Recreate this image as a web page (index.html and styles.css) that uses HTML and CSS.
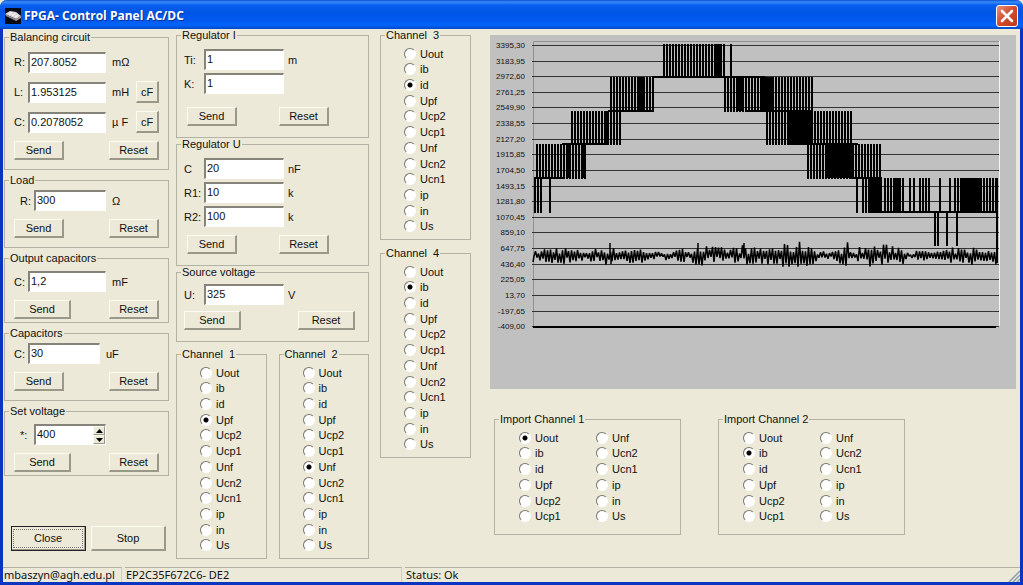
FILE: index.html
```html
<!DOCTYPE html>
<html lang="en">
<head>
    <meta charset="UTF-8">
    <meta name="viewport" content="width=device-width, initial-scale=1.0">
    <title>FPGA- Control Panel AC/DC</title>
    <link rel="stylesheet" href="styles.css">
</head>
<body>
    <div class="window">
        <header class="title-bar">
            <svg class="app-icon" width="16" height="16" viewBox="0 0 16 16" aria-hidden="true">
                <rect width="16" height="16" fill="#0a0a14"/>
                <path d="M0 6 L5 3 L11 4 L16 8 L11 11 Z" fill="#dcd8d8"/>
                <path d="M0 6 L11 11 V13 L1 8 Z" fill="#8f8c90"/>
                <path d="M11 11 L16 8 V10 L11 13 Z" fill="#b5a0a0"/>
                <path d="M4 6 L7 4.5 M7 7.5 L10 6 M10 9 L13 7.5" stroke="#fff" stroke-width="1"/>
            </svg>
            <h1>FPGA- Control Panel AC/DC</h1>
            <button class="close-window" type="button" aria-label="Close window">
                <svg width="14" height="14" viewBox="0 0 14 14" aria-hidden="true">
                    <path d="M2 2 L12 12 M12 2 L2 12" stroke="#fff" stroke-width="2.6" stroke-linecap="round"/>
                </svg>
            </button>
        </header>

        <main class="client">
            <div class="column circuit-column">
                <fieldset class="group balancing">
                    <legend>Balancing circuit</legend>
                    <div class="rows">
                        <div class="row">
                            <label for="bal-r">R:</label>
                            <input id="bal-r" type="text" value="207.8052">
                            <span class="unit">mΩ</span>
                        </div>
                        <div class="row">
                            <label for="bal-l">L:</label>
                            <input id="bal-l" type="text" value="1.953125">
                            <span class="unit">mH</span>
                            <button class="calc" type="button">cF</button>
                        </div>
                        <div class="row">
                            <label for="bal-c">C:</label>
                            <input id="bal-c" type="text" value="0.2078052">
                            <span class="unit">µ F</span>
                            <button class="calc" type="button">cF</button>
                        </div>
                    </div>
                    <div class="actions">
                        <button type="button">Send</button>
                        <button type="button">Reset</button>
                    </div>
                </fieldset>

                <fieldset class="group">
                    <legend>Load</legend>
                    <div class="row indented">
                        <label for="load-r">R:</label>
                        <input id="load-r" class="short" type="text" value="300">
                        <span class="unit">Ω</span>
                    </div>
                    <div class="actions">
                        <button type="button">Send</button>
                        <button type="button">Reset</button>
                    </div>
                </fieldset>

                <fieldset class="group roomy">
                    <legend>Output capacitors</legend>
                    <div class="row">
                        <label for="out-c">C:</label>
                        <input id="out-c" type="text" value="1,2">
                        <span class="unit">mF</span>
                    </div>
                    <div class="actions">
                        <button class="wide" type="button">Send</button>
                        <button type="button">Reset</button>
                    </div>
                </fieldset>

                <fieldset class="group">
                    <legend>Capacitors</legend>
                    <div class="row">
                        <label for="cap-c">C:</label>
                        <input id="cap-c" class="short" type="text" value="30">
                        <span class="unit">uF</span>
                    </div>
                    <div class="actions">
                        <button type="button">Send</button>
                        <button type="button">Reset</button>
                    </div>
                </fieldset>

                <fieldset class="group roomy">
                    <legend>Set voltage</legend>
                    <div class="row indented">
                        <label for="set-v">*:</label>
                        <div class="spinner">
                            <input id="set-v" class="short" type="text" value="400">
                            <div class="spin-buttons">
                                <button type="button" aria-label="Increase"><svg width="7" height="4" viewBox="0 0 7 4"><path d="M0 4 L3.5 0 L7 4 Z"/></svg></button>
                                <button type="button" aria-label="Decrease"><svg width="7" height="4" viewBox="0 0 7 4"><path d="M0 0 L3.5 4 L7 0 Z"/></svg></button>
                            </div>
                        </div>
                    </div>
                    <div class="actions">
                        <button class="wide" type="button">Send</button>
                        <button type="button">Reset</button>
                    </div>
                </fieldset>

                <div class="main-actions">
                    <button class="default" type="button"><span>Close</span></button>
                    <button type="button">Stop</button>
                </div>
            </div>

            <div class="column regulator-column">
                <fieldset class="group regulator regulator-i">
                    <legend>Regulator I</legend>
                    <div class="rows">
                        <div class="row">
                            <label for="reg-ti">Ti:</label>
                            <input id="reg-ti" type="text" value="1">
                            <span class="unit">m</span>
                        </div>
                        <div class="row">
                            <label for="reg-k">K:</label>
                            <input id="reg-k" type="text" value="1">
                        </div>
                    </div>
                    <div class="actions">
                        <button type="button">Send</button>
                        <button type="button">Reset</button>
                    </div>
                </fieldset>

                <fieldset class="group regulator">
                    <legend>Regulator U</legend>
                    <div class="rows">
                        <div class="row">
                            <label for="reg-c">C</label>
                            <input id="reg-c" type="text" value="20">
                            <span class="unit">nF</span>
                        </div>
                        <div class="row">
                            <label for="reg-r1">R1:</label>
                            <input id="reg-r1" type="text" value="10">
                            <span class="unit">k</span>
                        </div>
                        <div class="row">
                            <label for="reg-r2">R2:</label>
                            <input id="reg-r2" type="text" value="100">
                            <span class="unit">k</span>
                        </div>
                    </div>
                    <div class="actions">
                        <button type="button">Send</button>
                        <button type="button">Reset</button>
                    </div>
                </fieldset>

                <fieldset class="group regulator source">
                    <legend>Source voltage</legend>
                    <div class="row">
                        <label for="src-u">U:</label>
                        <input id="src-u" type="text" value="325">
                        <span class="unit">V</span>
                    </div>
                    <div class="actions">
                        <button class="wide" type="button">Send</button>
                        <button class="wide" type="button">Reset</button>
                    </div>
                </fieldset>

                <div class="channel-pair">
                    <fieldset class="group channel">
                        <legend>Channel&nbsp; 1</legend>
                        <div class="radios">
                            <label><input type="radio" name="ch1">Uout</label>
                            <label><input type="radio" name="ch1">ib</label>
                            <label><input type="radio" name="ch1">id</label>
                            <label><input type="radio" name="ch1" checked>Upf</label>
                            <label><input type="radio" name="ch1">Ucp2</label>
                            <label><input type="radio" name="ch1">Ucp1</label>
                            <label><input type="radio" name="ch1">Unf</label>
                            <label><input type="radio" name="ch1">Ucn2</label>
                            <label><input type="radio" name="ch1">Ucn1</label>
                            <label><input type="radio" name="ch1">ip</label>
                            <label><input type="radio" name="ch1">in</label>
                            <label><input type="radio" name="ch1">Us</label>
                        </div>
                    </fieldset>
                    <fieldset class="group channel">
                        <legend>Channel&nbsp; 2</legend>
                        <div class="radios">
                            <label><input type="radio" name="ch2">Uout</label>
                            <label><input type="radio" name="ch2">ib</label>
                            <label><input type="radio" name="ch2">id</label>
                            <label><input type="radio" name="ch2">Upf</label>
                            <label><input type="radio" name="ch2">Ucp2</label>
                            <label><input type="radio" name="ch2">Ucp1</label>
                            <label><input type="radio" name="ch2" checked>Unf</label>
                            <label><input type="radio" name="ch2">Ucn2</label>
                            <label><input type="radio" name="ch2">Ucn1</label>
                            <label><input type="radio" name="ch2">ip</label>
                            <label><input type="radio" name="ch2">in</label>
                            <label><input type="radio" name="ch2">Us</label>
                        </div>
                    </fieldset>
                </div>
            </div>

            <div class="column channel-column">
                <fieldset class="group channel">
                    <legend>Channel&nbsp; 3</legend>
                    <div class="radios">
                        <label><input type="radio" name="ch3">Uout</label>
                        <label><input type="radio" name="ch3">ib</label>
                        <label><input type="radio" name="ch3" checked>id</label>
                        <label><input type="radio" name="ch3">Upf</label>
                        <label><input type="radio" name="ch3">Ucp2</label>
                        <label><input type="radio" name="ch3">Ucp1</label>
                        <label><input type="radio" name="ch3">Unf</label>
                        <label><input type="radio" name="ch3">Ucn2</label>
                        <label><input type="radio" name="ch3">Ucn1</label>
                        <label><input type="radio" name="ch3">ip</label>
                        <label><input type="radio" name="ch3">in</label>
                        <label><input type="radio" name="ch3">Us</label>
                    </div>
                </fieldset>
                <fieldset class="group channel">
                    <legend>Channel&nbsp; 4</legend>
                    <div class="radios">
                        <label><input type="radio" name="ch4">Uout</label>
                        <label><input type="radio" name="ch4" checked>ib</label>
                        <label><input type="radio" name="ch4">id</label>
                        <label><input type="radio" name="ch4">Upf</label>
                        <label><input type="radio" name="ch4">Ucp2</label>
                        <label><input type="radio" name="ch4">Ucp1</label>
                        <label><input type="radio" name="ch4">Unf</label>
                        <label><input type="radio" name="ch4">Ucn2</label>
                        <label><input type="radio" name="ch4">Ucn1</label>
                        <label><input type="radio" name="ch4">ip</label>
                        <label><input type="radio" name="ch4">in</label>
                        <label><input type="radio" name="ch4">Us</label>
                    </div>
                </fieldset>
            </div>

            <div class="chart-column">
                <svg id="chart" class="chart" viewBox="0 0 526 354" role="img" aria-label="Channel waveforms"></svg>

                <div class="imports">
                    <fieldset class="group import">
                        <legend>Import Channel 1</legend>
                        <div class="radios">
                            <label><input type="radio" name="imp1" checked>Uout</label>
                            <label><input type="radio" name="imp1">ib</label>
                            <label><input type="radio" name="imp1">id</label>
                            <label><input type="radio" name="imp1">Upf</label>
                            <label><input type="radio" name="imp1">Ucp2</label>
                            <label><input type="radio" name="imp1">Ucp1</label>
                            <label><input type="radio" name="imp1">Unf</label>
                            <label><input type="radio" name="imp1">Ucn2</label>
                            <label><input type="radio" name="imp1">Ucn1</label>
                            <label><input type="radio" name="imp1">ip</label>
                            <label><input type="radio" name="imp1">in</label>
                            <label><input type="radio" name="imp1">Us</label>
                        </div>
                    </fieldset>
                    <fieldset class="group import">
                        <legend>Import Channel 2</legend>
                        <div class="radios">
                            <label><input type="radio" name="imp2">Uout</label>
                            <label><input type="radio" name="imp2" checked>ib</label>
                            <label><input type="radio" name="imp2">id</label>
                            <label><input type="radio" name="imp2">Upf</label>
                            <label><input type="radio" name="imp2">Ucp2</label>
                            <label><input type="radio" name="imp2">Ucp1</label>
                            <label><input type="radio" name="imp2">Unf</label>
                            <label><input type="radio" name="imp2">Ucn2</label>
                            <label><input type="radio" name="imp2">Ucn1</label>
                            <label><input type="radio" name="imp2">ip</label>
                            <label><input type="radio" name="imp2">in</label>
                            <label><input type="radio" name="imp2">Us</label>
                        </div>
                    </fieldset>
                </div>
            </div>
        </main>

        <footer class="status-bar">
            <span class="pane pane-mail">mbaszyn@agh.edu.pl</span>
            <span class="pane pane-device">EP2C35F672C6- DE2</span>
            <span class="pane pane-status">Status: Ok</span>
            <svg class="grip" width="12" height="12" viewBox="0 0 12 12" aria-hidden="true">
                <path d="M1 12 L12 1 M5 12 L12 5 M9 12 L12 9" stroke="#8f9aa8" stroke-width="1.5"/>
            </svg>
        </footer>
    </div>

    <script src="chart.js"></script>
</body>
</html>
```
FILE: styles.css
```css
* {
    box-sizing: border-box;
}

body {
    margin: 0;
    font-family: "Liberation Sans", Arial, sans-serif;
    font-size: 11px;
    color: #111;
    background-color: #ece9d8;
}

.window {
    display: flex;
    flex-direction: column;
    min-height: 100vh;
    border: solid #0a35c0;
    border-width: 0 3px 3px;
    border-radius: 7px 7px 0 0;
}

/* title bar */
.title-bar {
    display: flex;
    align-items: center;
    height: 29px;
    margin: 0 -3px;
    padding: 2px 5px 0;
    border-radius: 7px 7px 0 0;
    background: linear-gradient(#0a4fd0, #3a8cf8 2px, #0a5ff0 5px, #0055e5 12px, #0058ee 20px, #0064fb 25px, #0048c8);
}

.title-bar h1 {
    flex: 1;
    margin: 0 0 0 3px;
    font: bold 12px/16px "Open Sans", sans-serif;
    color: #fff;
    text-shadow: 1px 1px #06318f;
}

.close-window {
    display: flex;
    align-items: center;
    justify-content: center;
    width: 22px;
    height: 22px;
    padding: 0;
    border: 1px solid #fff;
    border-radius: 3px;
    background: linear-gradient(135deg, #e8927c, #d2492a 50%, #b93a1c);
}

/* columns */
.client {
    flex: 1;
    display: flex;
    align-items: flex-start;
    padding: 0 4px 0 1px;
}

.column {
    display: flex;
    flex-direction: column;
}

.circuit-column {
    width: 165px;
    margin-top: 2px;
    gap: 4px;
}

.regulator-column {
    width: 193px;
    margin-left: 7px;
}

.channel-column {
    width: 91px;
    margin-left: 11px;
    gap: 7px;
}

.chart-column {
    flex: 1;
    margin: 6px 0 0 19px;
}

/* group boxes */
.group {
    min-width: 0;
    margin: 0;
    padding: 4px 9px 9px;
    border: 1px solid #b4b2a4;
}

.group legend {
    height: 12px;
    margin-left: -5px;
    padding: 0 1px;
    line-height: 12px;
}

.group.balancing {
    padding-top: 8px;
}

.group.roomy {
    padding-top: 7px;
    padding-bottom: 3px;
}

.rows {
    display: flex;
    flex-direction: column;
    gap: 8px;
}

.row {
    display: flex;
    align-items: center;
    height: 21px;
}

.balancing .row {
    height: 22px;
}

.row.indented {
    padding-left: 6px;
}

.row label {
    width: 14px;
}

.row input {
    width: 78px;
    height: 21px;
    padding: 0 1px 2px;
    border: solid;
    border-width: 2px 1px 1px 2px;
    border-color: #85837a #fff #fff #85837a;
    background-color: #fff;
    font: 11px "Liberation Sans", Arial, sans-serif;
    color: #111;
}

.row input.short {
    width: 72px;
}

.unit {
    margin-left: 6px;
}

.spinner {
    position: relative;
}

.spin-buttons {
    position: absolute;
    top: 2px;
    right: 1px;
    display: flex;
    flex-direction: column;
}

/* buttons */
.group button,
.main-actions button {
    padding: 0;
    border: solid;
    border-width: 1px 2px 2px 1px;
    border-color: #fbfaf3 #9a9888 #9a9888 #fbfaf3;
    background-color: #ece9d8;
    font: 11px "Liberation Sans", Arial, sans-serif;
    color: #111;
}

.actions {
    display: flex;
    justify-content: space-between;
    margin-top: 8px;
}

.actions button {
    width: 50px;
    height: 19px;
}

.actions button.wide {
    width: 57px;
}

.row .calc {
    width: 23px;
    height: 22px;
    margin-left: auto;
}

.spin-buttons .spin,
.spin-buttons button {
    display: flex;
    align-items: center;
    justify-content: center;
    width: 12px;
    height: 9px;
    border-width: 1px;
}

.main-actions {
    display: flex;
    gap: 5px;
    margin: 46px 0 0 7px;
}

.main-actions button {
    width: 75px;
    height: 25px;
}

.main-actions .default {
    padding: 1px;
    border-color: #9a9888;
    outline: 1px solid #222;
    outline-offset: -1px;
}

.main-actions .default span {
    display: block;
    border: 1px dotted #777;
    line-height: 17px;
}

/* regulators */
.regulator {
    padding: 8px 7px 11px;
}

.regulator legend {
    margin-left: -3px;
}

.regulator .rows {
    gap: 3px;
}

.regulator .row label {
    width: 20px;
}

.regulator .row input {
    width: 80px;
}

.regulator .unit {
    margin-left: 4px;
}

.regulator .actions {
    justify-content: flex-start;
    gap: 42px;
    padding-left: 3px;
}

.regulator-i .actions {
    margin-top: 13px;
}

.regulator.source {
    padding-top: 6px;
}

.source .actions {
    margin-top: 6px;
    padding-left: 0;
    gap: 57px;
}

/* channels */
.channel-pair {
    display: grid;
    grid-template-columns: 1fr 1fr;
    gap: 12px;
    margin-top: 6px;
}

.channel {
    padding: 5px 4px 5px 23px;
}

.channel legend {
    margin-left: -19px;
}

.radios {
    display: grid;
    align-content: space-between;
    min-height: 188px;
}

.radios label {
    display: flex;
    align-items: center;
    gap: 4px;
    height: 15px;
}

.radios input {
    appearance: none;
    width: 12px;
    height: 12px;
    margin: 0;
    border: 1px solid;
    border-color: #77756c #fff #fff #77756c;
    border-radius: 50%;
    background-color: #fff;
}

.radios input:checked {
    background-image: radial-gradient(circle, #000 2px, transparent 3px);
}

/* chart */
.chart {
    display: block;
    width: 100%;
    background-color: #c0c0c0;
}

.chart text {
    font: 8px "Liberation Sans", Arial, sans-serif;
    fill: #111;
    text-anchor: end;
}

.chart .grid {
    stroke: #333;
    stroke-width: 1;
}

.chart .frame {
    fill: none;
    stroke: #909090;
}

.chart .frame-light {
    stroke: #f4f4f4;
}

.chart .axis {
    stroke: #000;
    stroke-width: 2;
}

.chart .wave {
    fill: none;
    stroke: #000;
    stroke-width: 2;
}

.chart .ripple {
    fill: none;
    stroke: #000;
    stroke-width: 1.5;
    stroke-linejoin: bevel;
}

.imports {
    display: flex;
    gap: 37px;
    margin: 24px 0 0 4px;
}

.import {
    width: 187px;
    padding: 5px 9px 10px 24px;
}

.import legend {
    margin-left: -20px;
}

.import .radios {
    grid-template-columns: 77px 1fr;
    grid-template-rows: repeat(6, 15px);
    grid-auto-flow: column;
    min-height: 94px;
}

/* status bar */
.status-bar {
    display: flex;
    gap: 3px;
    height: 15px;
    font: 11px/14px "Noto Sans", sans-serif;
}

.pane {
    padding-left: 1px;
    border-top: 1px solid #b4b2a4;
    border-right: 1px solid #d0cdbd;
}

.pane-mail {
    width: 119px;
}

.pane-device {
    width: 277px;
}

.pane-status {
    flex: 1;
    border-right: 0;
}

.grip {
    align-self: flex-end;
    margin-left: -15px;
}
```
FILE: chart.js
```js
const chart = document.getElementById('chart');

const labels = ['3395,30', '3183,95', '2972,60', '2761,25', '2549,90', '2338,55', '2127,20',
    '1915,85', '1704,50', '1493,15', '1281,80', '1070,45', '859,10', '647,75', '436,40',
    '225,05', '13,70', '-197,65', '-409,00'];

// y positions of the converter's voltage levels
const levels = [9, 42, 76, 109, 143, 177, 211];

// PWM bursts: [lower level, from x, to x, step]
const bursts = [
    [4, 47, 96, 3], [3, 82, 130, 3], [2, 121, 164, 3], [1, 174, 234, 3], [1, 241, 241, 3],
    [2, 235, 322, 3], [3, 277, 361, 3], [4, 318, 391, 3],
    [5, 367, 367, 3], [5, 373, 379, 3], [5, 381, 392, 2], [5, 395, 404, 3], [5, 404, 410, 2],
    [5, 413, 413, 3], [5, 420, 424, 4], [5, 430, 439, 3], [5, 450, 450, 3], [5, 460, 460, 3],
    [5, 465, 470, 3], [5, 471, 489, 2], [5, 491, 506, 3]
];

// stretches where the bursts merge: [lower level, from x, to x]
const solid = [
    [4, 77, 80], [4, 92, 95], [3, 115, 119], [2, 149, 153], [1, 226, 230],
    [2, 248, 254], [2, 271, 282], [3, 298, 323], [4, 336, 364], [5, 383, 392], [5, 473, 489]
];

// flat parts: [level, from x, to x]
const flats = [
    [4, 44, 73], [3, 72, 119], [2, 118, 162], [1, 162, 174], [1, 172, 275],
    [2, 256, 322], [3, 312, 368], [4, 360, 392], [5, 388, 508]
];

// ripple amplitude at given x
const envelope = [
    [44, 4], [55, 8], [70, 10], [85, 6], [100, 6], [116, 10], [122, 8], [150, 8], [165, 4], [186, 5],
    [200, 10], [208, 12], [216, 10], [235, 8], [253, 11], [262, 8], [280, 10], [300, 12], [312, 15],
    [320, 14], [327, 6], [345, 4], [358, 15], [366, 8], [378, 11], [395, 11], [403, 14], [412, 9],
    [420, 5], [440, 5], [455, 5], [465, 9], [475, 7], [482, 10], [492, 5], [500, 9], [508, 10]
];

function add(name, attrs, text) {
    const el = document.createElementNS('http://www.w3.org/2000/svg', name);
    for (const key in attrs) {
        el.setAttribute(key, attrs[key]);
    }
    if (text) {
        el.textContent = text;
    }
    chart.appendChild(el);
}

function amplitude(x) {
    for (let i = 1; i < envelope.length; i++) {
        const [x0, a0] = envelope[i - 1];
        const [x1, a1] = envelope[i];
        if (x <= x1) {
            return a0 + (a1 - a0) * (x - x0) / (x1 - x0);
        }
    }
    return 6;
}

add('path', { d: 'M43.5 291 V6.5 H509', class: 'frame' });
add('path', { d: 'M509.5 6 V291', class: 'frame-light' });

labels.forEach((label, i) => {
    const y = Math.round(10 + i * 15.62);
    add('text', { x: 35, y: y + 3 }, label);
    add('path', { d: `M42 ${y + 0.5} H509`, class: 'grid' });
});
add('path', { d: 'M43 292 H506', class: 'axis' });

let wave = '';
bursts.forEach(([level, from, to, step]) => {
    for (let x = from; x <= to; x += step) {
        wave += `M${x} ${levels[level - 1]}V${levels[level] + 1}`;
    }
});
flats.forEach(([level, from, to]) => {
    wave += `M${from} ${levels[level]}H${to}`;
});
// single drops below the lower level
[45, 48, 51, 60].forEach(x => {
    wave += `M${x} 143V178`;
});
[445, 448, 457, 467].forEach(x => {
    wave += `M${x} 177V211`;
});
wave += 'M507 143V228';
add('path', { d: wave, class: 'wave' });
solid.forEach(([level, from, to]) => {
    add('rect', { x: from, y: levels[level - 1], width: to - from, height: 34 });
});

let ripple = 'M43 227';
let seed = 7;
let sign = 1;
for (let x = 44; x <= 507; x += 1.5) {
    seed = (seed * 16807) % 2147483647;
    const factor = 0.15 + 0.85 * (seed / 2147483647);
    ripple += `L${x} ${(220.5 + sign * factor * amplitude(x)).toFixed(1)}`;
    sign = -sign;
}
ripple += 'M120 220V208M121 220V229M208 220V208M254 220V208';
add('path', { d: ripple, class: 'ripple' });
```
